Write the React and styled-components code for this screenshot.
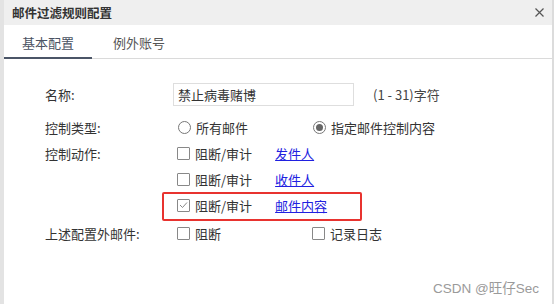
import React from 'react';
import styled, { createGlobalStyle } from 'styled-components';

const GlobalStyle = createGlobalStyle`
  html, body {
    margin: 0;
    padding: 0;
    background: #fff;
  }
  body {
    font-family: "Noto Sans CJK SC", "Noto Sans", sans-serif;
    color: #333;
  }
`

const Dialog = styled.div`
  position: relative;
  width: 554px;
  height: 304px;
  box-sizing: border-box;
  border-left: 4px solid #e3e3e3;
  border-right: 2px solid #dcdcdc;
  background: #fff;
  overflow: hidden;
`

const Header = styled.div`
  height: 25px;
  display: flex;
  align-items: center;
  justify-content: space-between;
  padding: 0 8px 0 8px;
  background: #efefef;
  font-size: 12.5px;
  font-weight: bold;
  color: #333;
`

const Close = styled.svg`
  width: 9px;
  height: 9px;
`

const Tabs = styled.div`
  height: 33px;
  display: flex;
  align-items: flex-end;
  border-bottom: 1px solid #dadada;
`

const Tab = styled.div`
  flex: none;
  width: 88px;
  height: 26px;
  box-sizing: border-box;
  display: flex;
  justify-content: center;
  align-items: flex-start;
  font-size: 13px;
  color: ${p => (p.$active ? '#4a5262' : '#555')};
  border-bottom: 2px solid ${p => (p.$active ? '#4b5567' : 'transparent')};
  margin-bottom: -1px;
  margin-left: ${p => (p.$active ? 0 : 3)}px;
`

const Form = styled.div`
  padding: 24px 0 0 41px;
  font-size: 13px;
`

const Row = styled.div`
  display: grid;
  grid-template-columns: 128px 1fr;
  margin-top: ${p => p.$gap || 0}px;
`

const Label = styled.div`
  height: ${p => p.$h || 26}px;
  display: flex;
  align-items: center;
  color: #333;
`

const Value = styled.div`
  display: flex;
  flex-direction: column;
`

const Line = styled.div`
  height: ${p => p.$h || 26}px;
  display: flex;
  align-items: center;
  padding-left: ${p => p.$pad || 0}px;
`

const Input = styled.div`
  width: 181px;
  height: 23px;
  box-sizing: border-box;
  border: 1px solid #dedede;
  display: flex;
  align-items: center;
  padding-left: 4px;
  font-size: 13px;
  color: #333;
`

const Hint = styled.span`
  margin-left: 19px;
  color: #444;
`

const Option = styled.label`
  width: ${p => p.$w || 'auto'};
  display: flex;
  align-items: center;
  color: #333;
`

const Radio = styled.span`
  width: 11px;
  height: 11px;
  border: 1px solid #777;
  border-radius: 50%;
  margin-right: 5px;
  display: flex;
  align-items: center;
  justify-content: center;
  &::after {
    content: '';
    width: 7px;
    height: 7px;
    border-radius: 50%;
    background: ${p => (p.$on ? '#666' : 'transparent')};
  }
`

const Box = styled.span`
  position: relative;
  width: 11px;
  height: 11px;
  border: 1px solid #888;
  border-radius: 1px;
  margin-right: 5px;
  display: flex;
  align-items: center;
  justify-content: center;
`

const Link = styled.a`
  margin-left: 23px;
  color: #2020e0;
  text-decoration: underline;
`

const Marker = styled.div`
  position: absolute;
  left: 158px;
  top: 192px;
  width: 200px;
  height: 29px;
  box-sizing: border-box;
  border: 2px solid #e8332f;
  border-radius: 2px;
`

const Watermark = styled.div`
  position: absolute;
  right: 13px;
  bottom: 7px;
  font-family: "Liberation Sans", "Noto Sans CJK SC", sans-serif;
  font-size: 13.5px;
  color: #9a9a9a;
`

const Check = ({ on }) => (
  <Box>
    {on && (
      <svg width="9" height="8" viewBox="0 0 9 8">
        <path d="M1 4 L3.5 6.5 L8 1.5" fill="none" stroke="#888" strokeWidth="1" />
      </svg>
    )}
  </Box>
)

const actions = [
  { target: '发件人', on: false },
  { target: '收件人', on: false },
  { target: '邮件内容', on: true },
]

const App = () => {
  return (
    <Dialog>
      <GlobalStyle />
      <Header>
        <span>邮件过滤规则配置</span>
        <Close viewBox="0 0 9 9">
          <path d="M0.5 0.5 L8.5 8.5 M8.5 0.5 L0.5 8.5" stroke="#555" strokeWidth="1.2" />
        </Close>
      </Header>
      <Tabs>
        <Tab $active>基本配置</Tab>
        <Tab>例外账号</Tab>
      </Tabs>
      <Form>
        <Row>
          <Label $h={23}>名称:</Label>
          <Line $h={23}>
            <Input>禁止病毒赌博</Input>
            <Hint>(1 - 31)字符</Hint>
          </Line>
        </Row>
        <Row $gap={8}>
          <Label>控制类型:</Label>
          <Line $pad={5}>
            <Option $w="135px"><Radio />所有邮件</Option>
            <Option><Radio $on />指定邮件控制内容</Option>
          </Line>
        </Row>
        <Row>
          <Label>控制动作:</Label>
          <Value>
            {actions.map(a => (
              <Line key={a.target} $pad={4}>
                <Option><Check on={a.on} />阻断/审计</Option>
                <Link>{a.target}</Link>
              </Line>
            ))}
          </Value>
        </Row>
        <Row $gap={2}>
          <Label>上述配置外邮件:</Label>
          <Line $pad={4}>
            <Option $w="135px"><Check />阻断</Option>
            <Option><Check />记录日志</Option>
          </Line>
        </Row>
      </Form>
      <Marker />
      <Watermark>CSDN @旺仔Sec</Watermark>
    </Dialog>
  );
}

export default App;
